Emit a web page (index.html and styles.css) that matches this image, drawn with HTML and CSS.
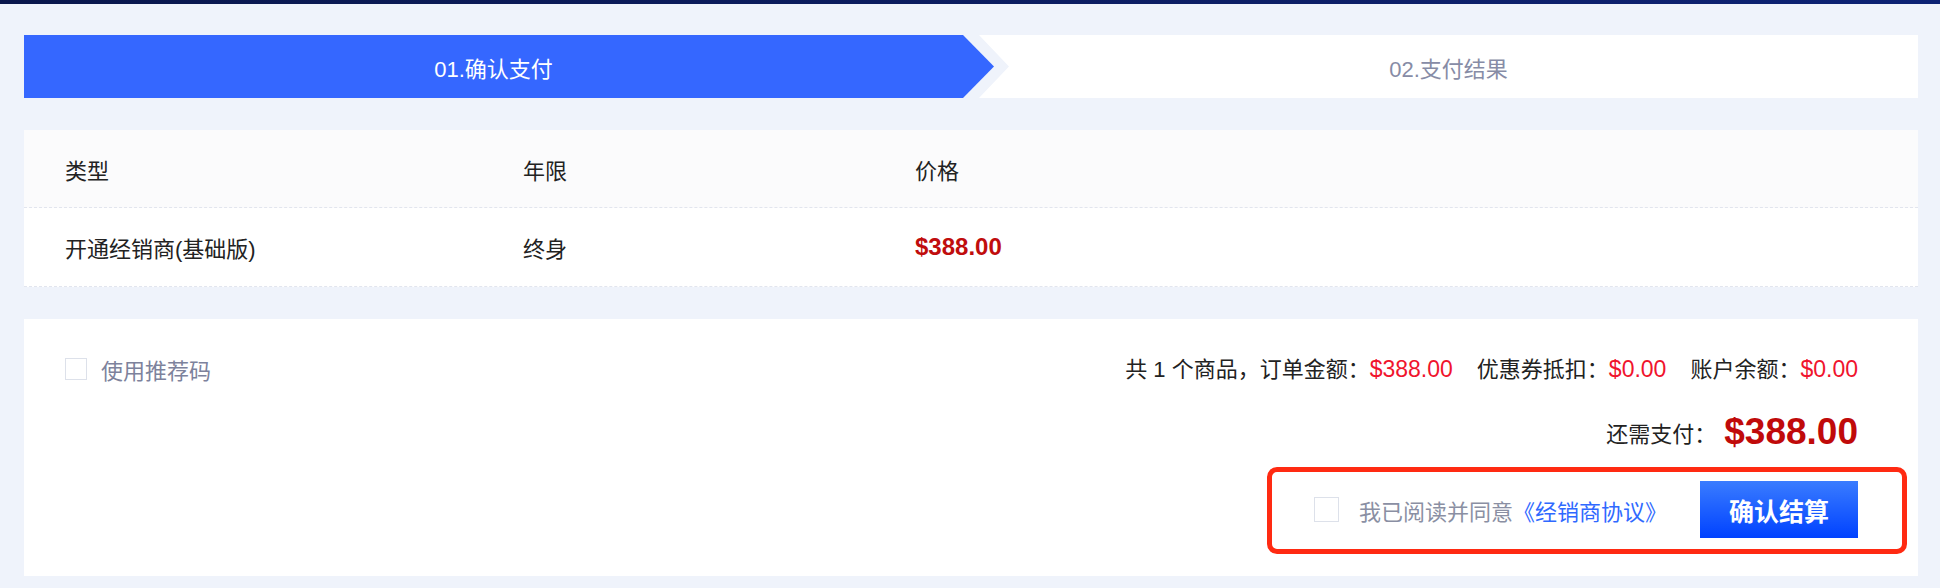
FILE: index.html
```html
<!DOCTYPE html>
<html lang="zh-CN">
<head>
  <meta charset="UTF-8">
  <meta name="viewport" content="width=device-width, initial-scale=1.0">
  <title>确认支付</title>
  <link rel="stylesheet" href="styles.css">
</head>
<body>
  <div class="topbar"></div>

  <div class="page">
    <div class="steps">
      <div class="step step-active">01.确认支付</div>
      <div class="step step-next">02.支付结果</div>
    </div>

    <div class="order-table">
      <div class="row row-head">
        <div>类型</div>
        <div>年限</div>
        <div>价格</div>
      </div>
      <div class="row">
        <div>开通经销商(基础版)</div>
        <div>终身</div>
        <div class="price">$388.00</div>
      </div>
    </div>

    <div class="pay-panel">
      <label class="referral">
        <span class="check"></span>
        <span>使用推荐码</span>
      </label>

      <div class="summary">
        <div class="summary-line">
          <span>共 1 个商品，订单金额：<em>$388.00</em></span>
          <span>优惠券抵扣：<em>$0.00</em></span>
          <span>账户余额：<em>$0.00</em></span>
        </div>
        <div class="total">
          <span>还需支付：</span>
          <strong>$388.00</strong>
        </div>
        <div class="agree">
          <span class="check check-lg"></span>
          <span class="agree-text">我已阅读并同意<a href="#">《经销商协议》</a></span>
          <button class="btn-pay">确认结算</button>
        </div>
      </div>
    </div>
  </div>
</body>
</html>
```

FILE: styles.css
```css
body {
  margin: 0;
  padding: 0;
  font-family: "Liberation Sans", "Noto Sans CJK SC", sans-serif;
  font-size: 22px;
  color: #222;
  background-color: #eff3fb;
}

.topbar {
  height: 4px;
  background: linear-gradient(90deg, #0a174c, #0d2274);
}

.page {
  padding: 31px 22px 12px 24px;
}

/* steps */
.steps {
  display: flex;
  height: 63px;
}

.step {
  display: flex;
  align-items: center;
  justify-content: center;
  height: 100%;
}

.step-active {
  flex: 0 0 970px;
  padding-right: 31px;
  box-sizing: border-box;
  background-color: #3567ff;
  color: #fff;
  clip-path: polygon(0 0, calc(100% - 31px) 0, 100% 50%, calc(100% - 31px) 100%, 0 100%);
}

.step-next {
  flex: 1;
  margin-left: -15px;
  background-color: #fff;
  color: #878ca6;
  clip-path: polygon(0 0, 100% 0, 100% 100%, 0 100%, 30px 50%);
}

/* table */
.order-table {
  margin-top: 32px;
  background-color: #fff;
}

.row {
  display: grid;
  grid-template-columns: 458px 392px 1fr;
  align-items: center;
  height: 78px;
  padding-left: 41px;
  border-bottom: 1px dashed #e2e5ee;
}

.row-head {
  height: 77px;
  background-color: #fbfbfc;
}

.price {
  color: #c00d0d;
  font-size: 24px;
  font-weight: bold;
}

/* pay panel */
.pay-panel {
  display: flex;
  justify-content: space-between;
  align-items: flex-start;
  margin-top: 32px;
  padding: 35px 60px 22px 41px;
  background-color: #fff;
}

.referral {
  display: flex;
  align-items: center;
  gap: 14px;
  height: 30px;
  color: #7d829c;
}

.check {
  display: inline-block;
  width: 20px;
  height: 20px;
  border: 1px solid #dde1ea;
  background-color: #fff;
}

.check-lg {
  width: 23px;
  height: 23px;
}

.summary {
  display: flex;
  flex-direction: column;
  align-items: flex-end;
}

.summary-line {
  display: flex;
  gap: 24px;
  line-height: 30px;
}

.summary-line em {
  font-style: normal;
  font-size: 23px;
  color: #f0142d;
}

.total {
  display: flex;
  align-items: center;
  margin-top: 25px;
  height: 44px;
}

.total strong {
  margin-left: 8px;
  font-size: 37px;
  color: #c00a0a;
}

.agree {
  display: flex;
  align-items: center;
  margin-top: 13px;
  margin-right: -49px;
  padding: 9px 44px 11px 42px;
  border: 5px solid #ff2a12;
  border-radius: 10px;
}

.agree-text {
  margin-left: 20px;
  color: #8a8fa3;
}

.agree-text a {
  color: #2f69ff;
  text-decoration: none;
}

.btn-pay {
  margin-left: 33px;
  width: 158px;
  height: 57px;
  border: none;
  background: linear-gradient(180deg, #3a7cff, #0042ff);
  color: #fff;
  font-family: inherit;
  font-size: 25px;
  font-weight: bold;
  cursor: pointer;
}
```
